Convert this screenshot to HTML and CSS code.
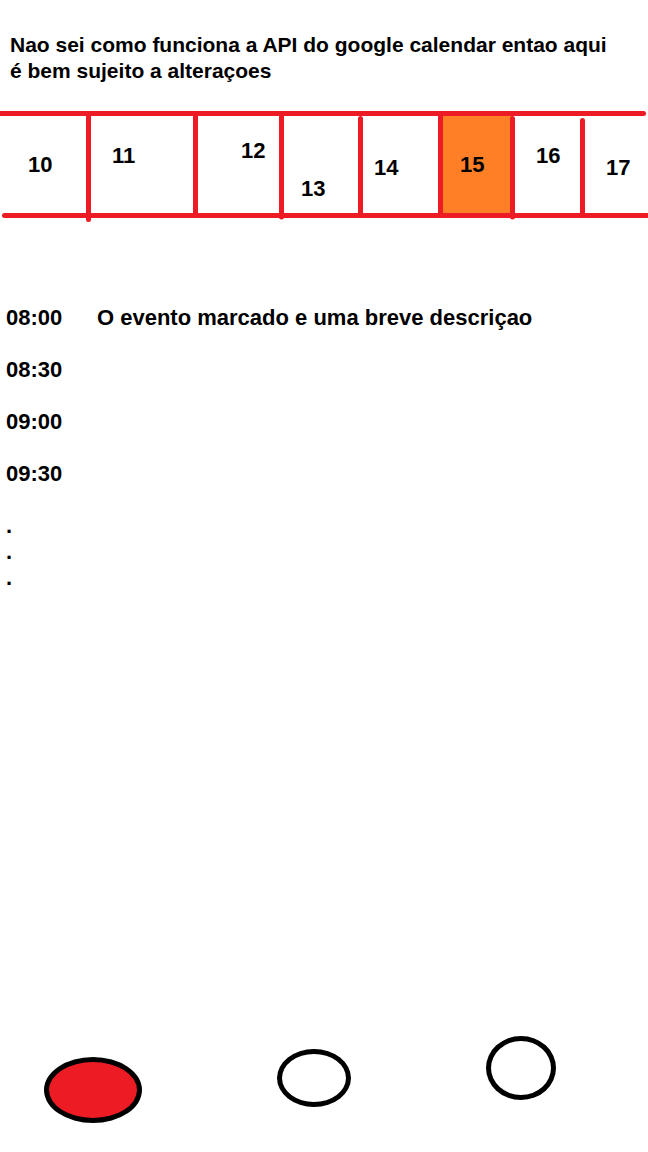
FILE: index.html
```html
<!DOCTYPE html>
<html lang="pt">
<head>
<meta charset="utf-8">
<meta name="viewport" content="width=device-width, initial-scale=1">
<title>Agenda</title>
<link rel="stylesheet" href="styles.css">
</head>
<body>
<main class="screen">
  <p class="note">Nao sei como funciona a API do google calendar entao aqui é bem sujeito a alteraçoes</p>

  <section class="week" aria-label="Dias">
    <div class="days">
      <button class="day x-28 y-middle" type="button">10</button>
      <button class="day x-24 y-upper" type="button">11</button>
      <button class="day x-46 y-high" type="button">12</button>
      <button class="day x-20 y-bottom" type="button">13</button>
      <button class="day x-14 y-low" type="button">14</button>
      <button class="day x-20 y-middle selected" type="button" aria-pressed="true">15</button>
      <button class="day x-24 y-upper" type="button">16</button>
      <button class="day x-24 y-low" type="button">17</button>
    </div>
    <svg class="lines" viewBox="0 0 648 112" preserveAspectRatio="none" aria-hidden="true">
      <path d="M-4 2.500H643.500M4.500 104.500H652M88.500 2.500V108.500M195.500 2.500V104.500M281.500 2.500V106M360.500 7.500V104.500M440.500 2.500V104.500M512.500 7.500V106M582.500 9.500V104.500"/>
    </svg>
  </section>

  <ul class="agenda">
    <li class="slot"><time>08:00</time><span>O evento marcado e uma breve descriçao</span></li>
    <li class="slot"><time>08:30</time></li>
    <li class="slot"><time>09:00</time></li>
    <li class="slot"><time>09:30</time></li>
  </ul>
  <div class="more"><span>.</span><span>.</span><span>.</span></div>

  <nav class="tabs" aria-label="Principal">
    <button class="tab tab-wide" type="button" aria-label="Agenda" aria-current="page"></button>
    <button class="tab tab-oval" type="button" aria-label="Segunda tela"></button>
    <button class="tab tab-round" type="button" aria-label="Terceira tela"></button>
  </nav>
</main>
</body>
</html>
```

FILE: styles.css
```css
* {
  box-sizing: border-box;
}

body {
  margin: 0;
  background: #fff;
  color: #000;
  font: bold 22px/26px "Liberation Sans", Arial, sans-serif;
}

button {
  margin: 0;
  padding: 0;
  border: 0;
  background: transparent;
  color: inherit;
  font: inherit;
  cursor: pointer;
}

.screen {
  display: flex;
  flex-direction: column;
  min-height: 100vh;
  padding: 32px 0 29px;
}

.note {
  margin: 0 24px 27px 10px;
  font-size: 21px;
}

.week {
  position: relative;
  height: 112px;
}

.days {
  display: grid;
  grid-template-columns: 88fr 107fr 86fr 79fr 80fr 72fr 70fr 66fr;
  height: 104px;
}

.day {
  display: flex;
  align-items: flex-start;
  justify-content: flex-start;
}

.selected {
  background: #ff7f27;
}

.x-14 { padding-left: 14px; }
.x-20 { padding-left: 20px; }
.x-24 { padding-left: 24px; }
.x-28 { padding-left: 28px; }
.x-46 { padding-left: 46px; }

.y-high { padding-top: 27px; }
.y-upper { padding-top: 32px; }
.y-middle { padding-top: 41px; }
.y-low { padding-top: 44px; }
.y-bottom { padding-top: 65px; }

/* Grid strokes drawn over the day cells */
.lines {
  position: absolute;
  inset: 0;
  width: 100%;
  height: 100%;
  pointer-events: none;
  fill: none;
  stroke: #ed1c24;
  stroke-width: 5px;
  stroke-linecap: round;
}

.lines path {
  vector-effect: non-scaling-stroke;
}

.agenda {
  display: grid;
  gap: 26px;
  margin: 82px 0 26px;
  padding: 0 6px;
  list-style: none;
}

.slot {
  display: grid;
  grid-template-columns: 91px 1fr;
}

.more {
  display: flex;
  flex-direction: column;
  padding: 0 6px;
}

.tabs {
  display: grid;
  grid-template-columns: 186fr 256fr 158fr 48fr;
  align-items: end;
  justify-items: center;
  margin-top: auto;
}

.tab {
  border: 5px solid #000;
  border-radius: 50%;
}

.tab[aria-current] {
  background: #ed1c24;
}

.tab-wide {
  width: 98px;
  height: 66px;
}

.tab-oval {
  width: 74px;
  height: 58px;
  margin-bottom: 16px;
}

.tab-round {
  width: 70px;
  height: 64px;
  margin-bottom: 23px;
}
```
